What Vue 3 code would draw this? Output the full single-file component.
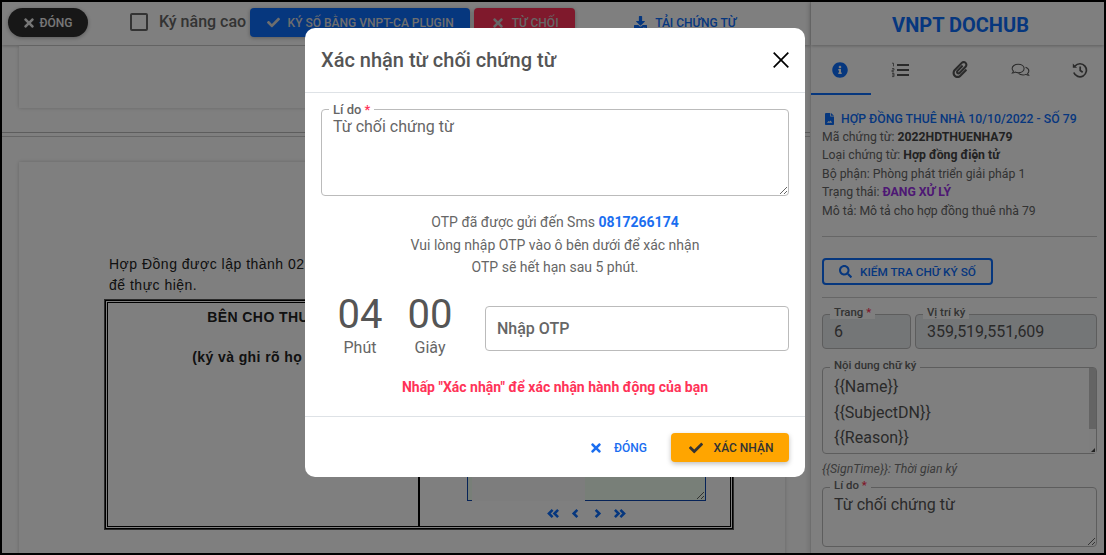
<template>
  <div class="screen">
    <!-- document viewer -->
    <div class="viewer">
      <div class="toolbar">
        <button class="btn btn-close">
          <svg class="ic ic-x" viewBox="0 0 352 512"><path :d="icons.times" /></svg>
          <span>ĐÓNG</span>
        </button>
        <label class="adv">
          <span class="checkbox"></span>
          <span>Ký nâng cao</span>
        </label>
        <button class="btn btn-sign">
          <svg class="ic" viewBox="0 0 512 512"><path :d="icons.check" /></svg>
          <span>KÝ SỐ BẰNG VNPT-CA PLUGIN</span>
        </button>
        <button class="btn btn-reject">
          <svg class="ic ic-x" viewBox="0 0 352 512"><path :d="icons.times" /></svg>
          <span>TỪ CHỐI</span>
        </button>
        <button class="btn btn-download">
          <svg class="ic" viewBox="0 0 512 512"><path :d="icons.download" /></svg>
          <span>TẢI CHỨNG TỪ</span>
        </button>
      </div>
      <div class="pages">
        <div class="page page-first"></div>
        <div class="page-sep"></div>
        <div class="page page-second">
          <p class="contract-text">Hợp Đồng được lập thành 02<br />để thực hiện.</p>
          <div class="sign-table">
            <div class="sign-cell">
              <b class="party">BÊN CHO THUÊ</b>
              <b class="party-note">(ký và ghi rõ họ tên)</b>
            </div>
            <div class="sign-cell sign-right">
              <div class="sign-wrap">
                <textarea class="sign-box" readonly></textarea>
                <div class="sign-cover"></div>
              </div>
              <div class="pager">
                <svg v-for="p in pagerIcons" :key="p" viewBox="0 0 16 12">
                  <path :d="p" />
                </svg>
              </div>
            </div>
          </div>
        </div>
      </div>
    </div>

    <!-- side panel -->
    <aside class="side">
      <div class="side-title">VNPT DOCHUB</div>
      <div class="tabs">
        <div class="tab active">
          <svg class="tab-ic" viewBox="0 0 512 512"><path fill="currentColor" :d="icons.info" /></svg>
        </div>
        <div class="tab">
          <svg class="tab-ic tab-ic-list" viewBox="0 0 18 16">
            <path d="M6 3h12M6 8h12M6 13h12" fill="none" stroke="currentColor" stroke-width="2" />
            <path d="M1 1.200h1.500v3.200M1 6.600h2v1.600H1v1.600h2M1 11.400h2v3.200H1M1 13h2" fill="none" stroke="currentColor" stroke-width=".8" />
          </svg>
        </div>
        <div class="tab">
          <svg class="tab-ic tab-ic-clip" viewBox="0 0 448 512"><path fill="currentColor" :d="icons.clip" /></svg>
        </div>
        <div class="tab">
          <svg class="tab-ic tab-ic-wide" viewBox="0 0 20 16">
            <path d="M7.500 2C4 2 1.200 4 1.200 6.400c0 1.100.6 2 1.400 2.800-.2.900-.8 1.600-1.200 2 1.100 0 2.200-.5 2.900-1 1 .4 2 .6 3.200.6 3.500 0 6.300-1.900 6.300-4.400S11 2 7.500 2z" fill="none" stroke="currentColor" stroke-width="1.100" />
            <path d="M15.300 5.200c2 .7 3.500 2.100 3.500 3.800 0 1-.5 1.900-1.300 2.600.1.900.7 1.600 1.100 2-1.100 0-2.100-.5-2.800-1-1 .4-2 .6-3.100.6-2 0-3.700-.7-4.800-1.700" fill="none" stroke="currentColor" stroke-width="1.100" />
          </svg>
        </div>
        <div class="tab">
          <svg class="tab-ic" viewBox="0 0 16 16">
            <path d="M3 4a6.500 6.500 0 1 1-1.200 6.500" fill="none" stroke="currentColor" stroke-width="1.700" />
            <path d="M.8 1.500v4.300h4.300z" fill="currentColor" />
            <path d="M8.200 4.500v4l2.500 1.800" fill="none" stroke="currentColor" stroke-width="1.700" />
          </svg>
        </div>
      </div>

      <div class="side-body">
        <div class="doc-title">
          <svg class="doc-ic" viewBox="0 0 12 16">
            <path fill="currentColor" d="M0 1.500C0 .7.700 0 1.500 0H7v4.500h5v10c0 .8-.7 1.500-1.500 1.500h-9C.7 16 0 15.300 0 14.500zM8 0l4 3.500H8zM2.500 13h7l-2-3-1.500 1.800-1-1z" />
          </svg>
          <span>HỢP ĐỒNG THUÊ NHÀ 10/10/2022 - SỐ 79</span>
        </div>
        <div class="meta">Mã chứng từ: <b>2022HDTHUENHA79</b></div>
        <div class="meta">Loại chứng từ: <b>Hợp đồng điện tử</b></div>
        <div class="meta">Bộ phận: Phòng phát triển giải pháp 1</div>
        <div class="meta">Trạng thái: <b class="status">ĐANG XỬ LÝ</b></div>
        <div class="meta">Mô tả: Mô tả cho hợp đồng thuê nhà 79</div>
        <div class="rule rule-a"></div>
        <button class="btn btn-verify">
          <svg class="ic" viewBox="0 0 512 512"><path :d="icons.search" /></svg>
          <span>KIỂM TRA CHỮ KÝ SỐ</span>
        </button>
        <div class="rule rule-b"></div>

        <div class="field-row">
          <div class="field field-page">
            <label>Trang <i>*</i></label>
            <input class="side-input" value="6" readonly />
          </div>
          <div class="field field-pos">
            <label>Vị trí ký</label>
            <input class="side-input" value="359,519,551,609" readonly />
          </div>
        </div>
        <div class="field field-content">
          <label>Nội dung chữ ký</label>
          <textarea class="side-area" readonly v-model="signText"></textarea>
          <!-- scrollbar is hidden in headless, drawn by hand -->
          <div class="scroll">
            <div class="scroll-thumb"></div>
            <div class="scroll-corner"></div>
          </div>
        </div>
        <div class="hint">{{ signHint }}</div>
        <div class="field field-reason">
          <label>Lí do <i>*</i></label>
          <textarea class="side-area side-reason" readonly v-model="reason"></textarea>
        </div>
      </div>
    </aside>

    <!-- modal -->
    <div class="overlay">
      <div class="modal">
        <div class="modal-head">
          <span class="modal-title">Xác nhận từ chối chứng từ</span>
          <svg class="modal-x" viewBox="0 0 16 16"><path d="M.7.700l14.600 14.600M15.300.700.700 15.300" /></svg>
        </div>
        <div class="modal-body">
          <div class="reason">
            <label>Lí do <i>*</i></label>
            <textarea readonly v-model="reason"></textarea>
          </div>
          <div class="otp-info">
            <div>OTP đã được gửi đến Sms <b>0817266174</b></div>
            <div>Vui lòng nhập OTP vào ô bên dưới để xác nhận</div>
            <div>OTP sẽ hết hạn sau 5 phút.</div>
          </div>
          <div class="otp-row">
            <div class="count">
              <div class="num">04</div>
              <div class="unit">Phút</div>
            </div>
            <div class="count">
              <div class="num">00</div>
              <div class="unit">Giây</div>
            </div>
            <input class="otp-input" placeholder="Nhập OTP" />
          </div>
          <div class="warn">Nhấp "Xác nhận" để xác nhận hành động của bạn</div>
        </div>
        <div class="modal-foot">
          <button class="btn btn-cancel">
            <svg class="ic ic-x" viewBox="0 0 352 512"><path :d="icons.times" /></svg>
            <span>ĐÓNG</span>
          </button>
          <button class="btn btn-confirm">
            <svg class="ic" viewBox="0 0 512 512"><path :d="icons.check" /></svg>
            <span>XÁC NHẬN</span>
          </button>
        </div>
      </div>
    </div>
  </div>
</template>

<script setup>
import { ref } from 'vue'

const icons = {
  times: 'M242.72 256l100.07-100.07c12.28-12.28 12.28-32.19 0-44.48l-22.24-22.24c-12.28-12.28-32.19-12.28-44.48 0L176 189.28 75.93 89.21c-12.28-12.28-32.19-12.28-44.48 0L9.21 111.45c-12.28 12.28-12.28 32.19 0 44.48L109.28 256 9.21 356.07c-12.28 12.28-12.28 32.19 0 44.48l22.24 22.24c12.28 12.28 32.2 12.28 44.48 0L176 322.72l100.07 100.07c12.28 12.28 32.2 12.28 44.48 0l22.24-22.24c12.28-12.28 12.28-32.19 0-44.48L242.72 256z',
  check: 'M173.898 439.404l-166.4-166.4c-9.997-9.997-9.997-26.206 0-36.204l36.203-36.204c9.997-9.998 26.207-9.998 36.204 0L192 312.69 432.095 72.596c9.997-9.997 26.207-9.997 36.204 0l36.203 36.204c9.997 9.997 9.997 26.206 0 36.204l-294.4 294.401c-9.998 9.997-26.207 9.997-36.204-.001z',
  info: 'M256 8C119.043 8 8 119.083 8 256c0 136.997 111.043 248 248 248s248-111.003 248-248C504 119.083 392.957 8 256 8zm0 110c23.196 0 42 18.804 42 42s-18.804 42-42 42-42-18.804-42-42 18.804-42 42-42zm56 254c0 6.627-5.373 12-12 12h-88c-6.627 0-12-5.373-12-12v-24c0-6.627 5.373-12 12-12h12v-64h-12c-6.627 0-12-5.373-12-12v-24c0-6.627 5.373-12 12-12h64c6.627 0 12 5.373 12 12v100h12c6.627 0 12 5.373 12 12v24z',
  search: 'M505 442.7L405.3 343c-4.5-4.5-10.6-7-17-7H372c27.6-35.3 44-79.7 44-128C416 93.1 322.9 0 208 0S0 93.1 0 208s93.1 208 208 208c48.3 0 92.7-16.4 128-44v16.3c0 6.4 2.5 12.5 7 17l99.7 99.7c9.4 9.4 24.6 9.4 33.9 0l28.3-28.3c9.4-9.4 9.4-24.6.1-34zM208 336c-70.7 0-128-57.2-128-128 0-70.7 57.2-128 128-128 70.7 0 128 57.2 128 128 0 70.7-57.2 128-128 128z',
  download: 'M216 0h80c13.3 0 24 10.7 24 24v168h87.7c17.8 0 26.7 21.5 14.1 34.1L269.7 378.3c-7.5 7.5-19.8 7.5-27.3 0L90.1 226.1c-12.6-12.6-3.7-34.1 14.1-34.1H192V24c0-13.3 10.7-24 24-24zm296 376v112c0 13.3-10.7 24-24 24H24c-13.3 0-24-10.7-24-24V376c0-13.3 10.7-24 24-24h146.7l49 49c20.1 20.1 52.5 20.1 72.6 0l49-49H488c13.3 0 24 10.7 24 24zm-124 88c0-11-9-20-20-20s-20 9-20 20 9 20 20 20 20-9 20-20zm64 0c0-11-9-20-20-20s-20 9-20 20 9 20 20 20 20-9 20-20z',
  clip: 'M43.246 466.142c-58.43-60.289-57.341-157.511 1.386-217.581L254.392 34c44.316-45.332 116.351-45.336 160.671 0 43.89 44.894 43.943 117.329 0 162.276L232.214 383.128c-29.855 30.537-78.633 30.111-107.982-.998-28.275-29.97-27.368-77.473 1.452-106.953l143.743-146.835c6.182-6.314 16.312-6.422 22.626-.241l22.861 22.379c6.315 6.182 6.422 16.312.241 22.626L171.427 319.927c-4.932 5.045-5.236 13.428-.648 18.292 4.372 4.634 11.245 4.711 15.688.165l182.849-186.851c19.613-20.062 19.613-52.725-.011-72.798-19.189-19.627-49.957-19.637-69.154 0L90.39 293.295c-34.763 35.56-35.299 93.12-1.191 128.313 34.01 35.093 88.985 35.137 123.058.286l172.06-175.999c6.177-6.319 16.307-6.433 22.626-.256l22.877 22.364c6.319 6.177 6.434 16.307.256 22.626l-172.06 175.998c-59.576 60.938-155.943 60.216-214.77-.485z'
}

const pagerIcons = [
  'M7 2 3 6l4 4M13 2 9 6l4 4',
  'M10 2 6 6l4 4',
  'M6 2l4 4-4 4',
  'M3 2l4 4-4 4M9 2l4 4-4 4'
]

const reason = ref('Từ chối chứng từ')
const signText = ref('{{Name}}\n{{SubjectDN}}\n{{Reason}}\n{{SignTime}}')
const signHint = '{{SignTime}}: Thời gian ký'
</script>

<style>
html, body { margin: 0; height: 100%; overflow: hidden; }
</style>

<style scoped>
* { box-sizing: border-box; }

.screen {
  position: relative;
  display: flex;
  width: 1106px;
  height: 555px;
  overflow: hidden;
  border: 2px solid #000;
  background: #fff;
  font-family: Roboto, "Noto Sans", sans-serif;
  color: #333;
}

.ic { width: 13px; height: 13px; fill: currentColor; flex: none; }
.ic-x { width: 10px; height: 14px; }

.btn {
  display: inline-flex;
  align-items: center;
  justify-content: center;
  height: 29px;
  border: 0;
  padding: 0;
  border-radius: 4px;
  font-family: inherit;
  font-size: 12px;
  font-weight: 500;
}

/* viewer */
.viewer { width: 808px; flex: none; display: flex; flex-direction: column; }

.toolbar {
  height: 43px;
  flex: none;
  display: flex;
  align-items: flex-start;
  padding: 6px 0 0 6px;
  box-shadow: 0 1px 3px rgba(0, 0, 0, .25);
  position: relative;
}

.btn-close {
  width: 80px;
  border-radius: 15px;
  background: #2e2e2e;
  color: #eee;
  gap: 6px;
  box-shadow: 0 1px 4px rgba(0, 0, 0, .3);
}

.adv {
  display: flex;
  align-items: center;
  gap: 11px;
  margin-left: 42px;
  height: 29px;
  font-size: 16px;
  font-weight: 500;
  color: #666;
  margin-top: -1px;
}

.checkbox {
  width: 18px;
  height: 18px;
  border: 2px solid #666;
  border-radius: 2px;
}

.btn-sign {
  width: 220px;
  margin-left: 4px;
  background: #0d6efd;
  color: #ddd;
  gap: 8px;
  box-shadow: 0 1px 4px rgba(0, 0, 0, .3);
}

.btn-reject {
  width: 101px;
  margin-left: 4px;
  padding-left: 2px;
  background: #ff3358;
  color: #ccc;
  gap: 9px;
  box-shadow: 0 1px 4px rgba(0, 0, 0, .3);
}

.btn-download {
  background: none;
  color: #0d6efd;
  margin-left: 59px;
  gap: 8px;
}

.pages { flex: 1; padding-left: 17px; position: relative; overflow: hidden; }

.page { width: 766px; background: #fff; box-shadow: 0 0 4px rgba(0, 0, 0, .2); }

.page-first { height: 62px; margin-top: 1px; }

.page-sep {
  width: 808px;
  margin-left: -17px;
  height: 5px;
  margin-top: 24px;
  border-top: 1px solid #bbb;
  border-bottom: 1px solid #ccc;
}

.page-second { height: 420px; margin-top: 25px; padding: 92px 0 0 86px; }

.contract-text {
  margin: 0;
  font-family: "Liberation Sans", sans-serif;
  font-size: 14px;
  line-height: 21px;
  letter-spacing: .5px;
  padding-left: 4px;
  color: #222;
}

.sign-table {
  width: 628px;
  height: 229px;
  margin-top: 4px;
  display: flex;
  border: 3px double #000;
  outline: 1px solid #555;
  font-family: "Liberation Sans", sans-serif;
  font-size: 14px;
  color: #222;
}

.sign-cell {
  flex: 0 0 312px;
  display: flex;
  flex-direction: column;
  align-items: center;
  padding-top: 4px;
  border-right: 2px solid #000;
}

.party { line-height: 20px; letter-spacing: .4px; }
.party-note { margin-top: 20px; line-height: 20px; letter-spacing: .4px; }

.sign-right {
  flex: 1;
  border-right: 0;
  padding-top: 0;
  padding-left: 22px;
  justify-content: flex-end;
}

.sign-wrap { position: relative; width: 239px; height: 60px; flex: none; }

.sign-box {
  display: block;
  width: 100%;
  height: 100%;
  padding: 0;
  border: 1px solid #0d47b0;
  border-radius: 0;
  background: #f0fff0;
  outline: 0;
}

.sign-cover {
  position: absolute;
  left: 5px;
  right: 121px;
  top: 0;
  bottom: 0;
  background: #fafafa;
}

.pager {
  height: 25px;
  display: flex;
  align-items: center;
  gap: 7px;
  color: #0d6efd;
}

.pager svg { height: 11px; width: 15px; fill: none; stroke: currentColor; stroke-width: 2.800; }

/* side panel */
.side {
  flex: 1;
  min-width: 0;
  display: flex;
  flex-direction: column;
  background: #fff;
  border-left: 1px solid #ddd;
  box-shadow: -2px 0 4px rgba(0, 0, 0, .1);
  position: relative;
}

.side-title {
  height: 43px;
  flex: none;
  padding-left: 6px;
  text-align: center;
  font-size: 20px;
  font-weight: 700;
  line-height: 46px;
  color: #0d6efd;
  box-shadow: 0 1px 3px rgba(0, 0, 0, .25);
}

.tabs { height: 50px; flex: none; display: flex; }

.tab {
  flex: none;
  width: 60px;
  display: flex;
  align-items: center;
  justify-content: center;
  padding: 1px 2px 0 0;
  color: #555;
  border-bottom: 2px solid transparent;
}

.tab.active { color: #0d6efd; border-bottom-color: #0d6efd; }

.tab-ic { width: 16px; height: 16px; }
.tab-ic-list { width: 18px; }
.tab-ic-clip { height: 17px; }
.tab-ic-wide { width: 19px; }

.side-body { padding: 15px 7px 0 11px; }

.doc-title {
  display: flex;
  align-items: center;
  gap: 7px;
  height: 18px;
  font-size: 12.250px;
  font-weight: 500;
  color: #0d6efd;
  padding-left: 3px;
}

.doc-ic { width: 9px; height: 12px; flex: none; }

.meta { font-size: 12.250px; line-height: 18.400px; color: #666; }
.meta b { font-weight: 700; color: #444; }
.meta .status { color: #9b30e8; font-weight: 700; }

.rule { height: 1px; background: #ccc; }
.rule-a { margin-top: 16px; }
.rule-b { margin-top: 12px; }

.btn-verify {
  width: 171px;
  height: 27px;
  margin-top: 21px;
  border: 2px solid #0d6efd;
  background: #fff;
  color: #0d6efd;
  font-size: 11.800px;
  gap: 8px;
}

.field { position: relative; }

.field label {
  position: absolute;
  top: -9px;
  left: 8px;
  padding: 0 4px;
  background: #fff;
  font-size: 11.400px;
  line-height: 14px;
  color: #666;
  font-weight: 500;
  z-index: 1;
}

.field label i, .reason label i { font-style: normal; color: #ff3358; }

.field-row { display: flex; gap: 4px; margin-top: 16px; }
.field-page { width: 89px; }
.field-pos { width: 182px; }

.side-input {
  display: block;
  width: 100%;
  height: 35px;
  border: 1px solid #bbb;
  border-radius: 4px;
  background: #e9ecef;
  padding: 0 11px;
  font-family: inherit;
  font-size: 16px;
  color: #555;
  outline: 0;
}

.field-content { margin-top: 18px; }

.side-area {
  display: block;
  width: 100%;
  height: 87px;
  border: 1px solid #bbb;
  border-radius: 4px;
  background: #fff;
  padding: 6px 11px 0;
  font-family: inherit;
  font-size: 16px;
  line-height: 25.500px;
  color: #555;
  outline: 0;
  overflow: hidden;
  resize: none;
}

.scroll {
  position: absolute;
  top: 1px;
  right: 1px;
  bottom: 1px;
  width: 7px;
  background: #fdfdfd;
}

.scroll-thumb { height: 61px; background: #c8c8c8; }

.scroll-corner {
  position: absolute;
  left: 2px;
  bottom: 1px;
  width: 4px;
  height: 4px;
  background: #444;
  clip-path: polygon(100% 0, 100% 100%, 0 100%);
}

.hint { margin-top: 8px; font-size: 12.250px; line-height: 14px; font-style: italic; color: #777; }

.field-reason { margin-top: 11px; }
.side-reason { height: 60px; padding-top: 6px; line-height: 22px; resize: both; }

/* modal */
.overlay {
  position: absolute;
  inset: 0;
  z-index: 5;
  display: flex;
  justify-content: center;
  padding: 26px 0 0 4px;
  background: rgba(0, 0, 0, .5);
}

.modal {
  width: 500px;
  height: 449px;
  background: #fff;
  border-radius: 10px;
  display: flex;
  flex-direction: column;
}

.modal-head {
  height: 65px;
  flex: none;
  display: flex;
  align-items: center;
  justify-content: space-between;
  padding: 0 16px;
  border-bottom: 1px solid #dee2e6;
}

.modal-title { font-size: 20px; font-weight: 500; color: #555; }

.modal-x { width: 16px; height: 16px; fill: none; stroke: #000; stroke-width: 1.700; }

.modal-body { flex: 1; padding: 16px 16px 0; }

.reason { position: relative; }

.reason label {
  position: absolute;
  top: -6px;
  left: 8px;
  padding: 0 4px;
  background: #fff;
  font-size: 13px;
  line-height: 14px;
  font-weight: 500;
  color: #666;
}

.reason textarea {
  display: block;
  width: 100%;
  height: 87px;
  border: 1px solid #bbb;
  border-radius: 4px;
  padding: 6px 11px 0;
  font-family: inherit;
  font-size: 16px;
  line-height: 22px;
  color: #666;
  outline: 0;
}

.otp-info {
  margin-top: 15px;
  text-align: center;
  font-size: 14px;
  line-height: 22.500px;
  color: #666;
}

.otp-info b { color: #1a6ef0; font-weight: 700; }

.otp-row { display: flex; align-items: flex-start; margin-top: 15px; }

.count { width: 70px; text-align: center; margin-top: -1px; }
.count:first-child { margin-left: 4px; }

.num { font-size: 40px; font-weight: 400; line-height: 43px; color: #555; }
.unit { font-size: 16px; line-height: 20px; color: #666; margin-top: 2px; }

.otp-input {
  flex: 1;
  height: 45px;
  margin-top: 12px;
  margin-left: 20px;
  border: 1px solid #bbb;
  border-radius: 4px;
  padding: 0 11px;
  font-family: inherit;
  font-size: 16px;
  font-weight: 500;
  outline: 0;
}

.otp-input::placeholder { color: #666; opacity: 1; font-weight: 500; }

.warn {
  margin-top: 19px;
  text-align: center;
  font-size: 14px;
  font-weight: 700;
  line-height: 20px;
  color: #ff3358;
}

.modal-foot {
  height: 61px;
  flex: none;
  display: flex;
  align-items: flex-start;
  justify-content: flex-end;
  gap: 24px;
  padding: 16px 16px 0;
  border-top: 1px solid #dee2e6;
}

.btn-cancel { background: none; color: #1a6ef0; gap: 13px; }

.btn-confirm {
  width: 118px;
  padding-left: 2px;
  background: #ffa500;
  color: #333;
  gap: 11px;
  box-shadow: 0 2px 5px rgba(0, 0, 0, .25);
}

.btn-confirm .ic { width: 14px; height: 14px; }
</style>
